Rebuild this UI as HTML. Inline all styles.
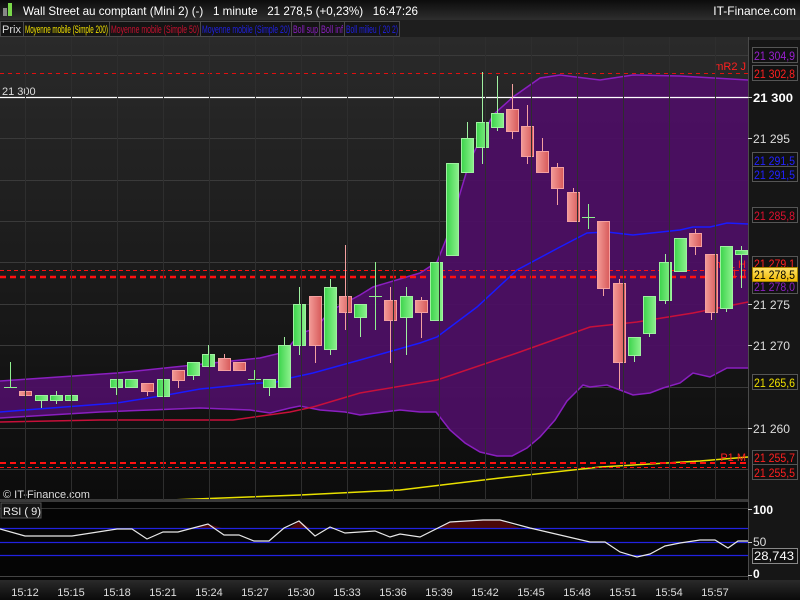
<!DOCTYPE html>
<html><head><meta charset="utf-8"><style>
html,body{margin:0;padding:0;width:800px;height:600px;overflow:hidden;background:#0a0a0a;font-family:"Liberation Sans",sans-serif}
svg text{font-family:"Liberation Sans",sans-serif}
</style></head><body>
<svg width="800" height="600" viewBox="0 0 800 600" xmlns="http://www.w3.org/2000/svg">
<defs>
<linearGradient id="bg" x1="0" y1="0" x2="0" y2="1"><stop offset="0" stop-color="#2b2b2b"/><stop offset="1" stop-color="#0c0c0c"/></linearGradient>
<linearGradient id="hd" x1="0" y1="0" x2="0" y2="1"><stop offset="0" stop-color="#0c0c0c"/><stop offset="1" stop-color="#2e2e2e"/></linearGradient>
<linearGradient id="gg" x1="0" y1="0" x2="1" y2="0"><stop offset="0" stop-color="#3cd44c"/><stop offset="1" stop-color="#8cf08c"/></linearGradient>
<linearGradient id="rg" x1="0" y1="0" x2="1" y2="0"><stop offset="0" stop-color="#f29a96"/><stop offset="1" stop-color="#d85a5a"/></linearGradient>
<linearGradient id="yl" x1="0" y1="0" x2="0" y2="1"><stop offset="0" stop-color="#ffe36a"/><stop offset="1" stop-color="#f0b800"/></linearGradient>
<linearGradient id="lb" x1="0" y1="0" x2="0" y2="1"><stop offset="0" stop-color="#2a2a2a"/><stop offset="1" stop-color="#0a0a0a"/></linearGradient>
</defs>
<!-- header -->
<rect x="0" y="0" width="800" height="20" fill="url(#hd)"/>
<rect x="3" y="8" width="4" height="8" fill="#888"/><rect x="8" y="3" width="4" height="13" fill="#7ad94a"/>
<text x="23" y="15" font-size="12" fill="#fff" xml:space="preserve" textLength="395" lengthAdjust="spacingAndGlyphs">Wall Street au comptant (Mini 2) (-)   1 minute   21 278,5 (+0,23%)   16:47:26</text>
<text x="796" y="15" font-size="12" fill="#fff" text-anchor="end">IT-Finance.com</text>
<!-- chart background -->
<rect x="0" y="20" width="800" height="480" fill="url(#bg)"/>
<rect x="748" y="40" width="52" height="560" fill="#161616"/>
<!-- grid -->
<g stroke="#3a3a3a" stroke-width="1">
<line x1="0" y1="55.5" x2="748" y2="55.5"/><line x1="0" y1="138.5" x2="748" y2="138.5"/><line x1="0" y1="180.5" x2="748" y2="180.5"/><line x1="0" y1="221.5" x2="748" y2="221.5"/><line x1="0" y1="262.5" x2="748" y2="262.5"/><line x1="0" y1="304.5" x2="748" y2="304.5"/><line x1="0" y1="345.5" x2="748" y2="345.5"/><line x1="0" y1="387.5" x2="748" y2="387.5"/><line x1="0" y1="428.5" x2="748" y2="428.5"/><line x1="0" y1="469.5" x2="748" y2="469.5"/>
<g id="vg"><line x1="25.5" y1="37" x2="25.5" y2="500"/><line x1="71.5" y1="37" x2="71.5" y2="500"/><line x1="117.5" y1="37" x2="117.5" y2="500"/><line x1="163.5" y1="37" x2="163.5" y2="500"/><line x1="209.5" y1="37" x2="209.5" y2="500"/><line x1="255.5" y1="37" x2="255.5" y2="500"/><line x1="301.5" y1="37" x2="301.5" y2="500"/><line x1="347.5" y1="37" x2="347.5" y2="500"/><line x1="393.5" y1="37" x2="393.5" y2="500"/><line x1="439.5" y1="37" x2="439.5" y2="500"/><line x1="485.5" y1="37" x2="485.5" y2="500"/><line x1="531.5" y1="37" x2="531.5" y2="500"/><line x1="577.5" y1="37" x2="577.5" y2="500"/><line x1="623.5" y1="37" x2="623.5" y2="500"/><line x1="669.5" y1="37" x2="669.5" y2="500"/><line x1="715.5" y1="37" x2="715.5" y2="500"/></g>
</g>
<!-- bollinger fill -->
<path d="M0,381 L117,373 L260,358 L285,352 L300,333 L315,329 L330,311 L360,295 L373,287 L420,273 L437,262 L447,237 L470,160 L493,115 L513,97 L540,78 L560,75 L600,80 L633,75 L680,76 L748,80 L748,368 L727,368 L710,377 L693,373 L680,383 L663,388 L650,393 L633,395 L620,390 L607,385 L590,387 L583,385 L567,401 L555,420 L540,437 L527,448 L512,456 L497,456 L480,452 L465,443 L450,430 L436,412 L420,412 L400,410 L360,415 L345,412 L320,410 L300,406 L290,408 L270,413 L250,410 L200,408 L150,410 L100,412 L50,415 L0,418 Z" fill="#4c0f63" opacity="0.95"/>
<path d="M0,381 L117,373 L260,358 L285,352 L300,333 L315,329 L330,311 L360,295 L373,287 L420,273 L437,262 L447,237 L470,160 L493,115 L513,97 L540,78 L560,75 L600,80 L633,75 L680,76 L748,80" fill="none" stroke="#8a1fc0" stroke-width="1.5"/>
<path d="M748,368 L727,368 L710,377 L693,373 L680,383 L663,388 L650,393 L633,395 L620,390 L607,385 L590,387 L583,385 L567,401 L555,420 L540,437 L527,448 L512,456 L497,456 L480,452 L465,443 L450,430 L436,412 L420,412 L400,410 L360,415 L345,412 L320,410 L300,406 L290,408 L270,413 L250,410 L200,408 L150,410 L100,412 L50,415 L0,418" fill="none" stroke="#8a1fc0" stroke-width="1.5"/>
<!-- MA200 yellow -->
<path d="M170,500 L300,495 L400,490 L500,478 L600,467 L700,461 L748,457" fill="none" stroke="#e8e000" stroke-width="1.5"/>
<!-- MA50 red -->
<path d="M0,422 L100,420 L233,420 L290,412 L313,407 L360,393 L437,380 L517,353 L590,327 L637,322 L693,313 L748,302" fill="none" stroke="#c8103a" stroke-width="1.5"/>
<!-- MA20 blue -->
<path d="M0,412 L25,410 L117,403 L167,395 L200,389 L260,383 L273,383 L290,378 L313,373 L360,360 L420,343 L437,337 L477,307 L517,270 L560,247 L587,233 L607,232 L633,235 L680,230 L693,227 L710,227 L727,223 L748,224" fill="none" stroke="#1a1aff" stroke-width="1.5"/>
<!-- horizontal lines -->
<line x1="0" y1="97.5" x2="748" y2="97.5" stroke="#fff" stroke-width="1.2"/>
<text x="2" y="95" font-size="11" fill="#ddd">21 300</text>
<line x1="0" y1="73.5" x2="748" y2="73.5" stroke="#e01010" stroke-dasharray="4,4"/>
<text x="746" y="70" font-size="11" fill="#ff2020" text-anchor="end">mR2 J</text>
<line x1="0" y1="270.5" x2="748" y2="270.5" stroke="#ff1010" stroke-dasharray="4,3"/>
<line x1="0" y1="277" x2="748" y2="277" stroke="#ff1010" stroke-width="2.5" stroke-dasharray="6,4"/>
<text x="746" y="268" font-size="11" fill="#ff2020" text-anchor="end">mR1 H</text>
<text x="746" y="277" font-size="11" fill="#ff2020" text-anchor="end">R1 J</text>
<line x1="0" y1="463" x2="748" y2="463" stroke="#ff1010" stroke-width="2" stroke-dasharray="6,4"/>
<line x1="0" y1="467.5" x2="748" y2="467.5" stroke="#ff1010" stroke-dasharray="4,3"/>
<text x="746" y="461" font-size="11" fill="#ff2020" text-anchor="end">P1 M</text>
<!-- candles -->
<g stroke-width="1">
<g stroke="#8ff08f"><line x1="10.5" y1="362" x2="10.5" y2="387"/><line x1="4" y1="387.5" x2="17" y2="387.5"/></g>
<g stroke="#f4a0a0"><line x1="25.5" y1="379" x2="25.5" y2="395"/><rect x="19.5" y="391.5" width="12" height="4" fill="url(#rg)"/></g>
<g stroke="#9ff0a0" fill="url(#gg)">
<line x1="41.5" y1="395" x2="41.5" y2="408"/><rect x="35.5" y="395.5" width="12" height="5"/>
<line x1="56.5" y1="391" x2="56.5" y2="404"/><rect x="50.5" y="395.5" width="12" height="5"/>
<line x1="71.5" y1="395" x2="71.5" y2="413"/><rect x="65.5" y="395.5" width="12" height="5"/>
<line x1="116.5" y1="379" x2="116.5" y2="395"/><rect x="110.5" y="379.5" width="12" height="8"/>
<rect x="125.5" y="379.5" width="12" height="8"/>
<rect x="157.5" y="379.5" width="12" height="17"/>
<line x1="193.5" y1="362" x2="193.5" y2="380"/><rect x="187.5" y="362.5" width="12" height="13"/>
<line x1="208.5" y1="345" x2="208.5" y2="366"/><rect x="202.5" y="354.5" width="12" height="12"/>
<line x1="269.5" y1="379" x2="269.5" y2="396"/><rect x="263.5" y="379.5" width="12" height="8"/>
<line x1="284.5" y1="337" x2="284.5" y2="387"/><rect x="278.5" y="345.5" width="12" height="42"/>
<line x1="299.5" y1="287" x2="299.5" y2="355"/><rect x="293.5" y="304.5" width="12" height="41"/>
<line x1="330.5" y1="279" x2="330.5" y2="355"/><rect x="324.5" y="287.5" width="12" height="62"/>
<line x1="360.5" y1="304" x2="360.5" y2="337"/><rect x="354.5" y="304.5" width="12" height="13"/>
<line x1="406.5" y1="287" x2="406.5" y2="355"/><rect x="400.5" y="296.5" width="12" height="21"/>
<rect x="430.5" y="262.5" width="12" height="58"/>
<rect x="446.5" y="163.5" width="12" height="92"/>
<line x1="467.5" y1="122" x2="467.5" y2="172"/><rect x="461.5" y="138.5" width="12" height="34"/>
<line x1="482.5" y1="72" x2="482.5" y2="164"/><rect x="476.5" y="122.5" width="12" height="25"/>
<line x1="497.5" y1="76" x2="497.5" y2="131"/><rect x="491.5" y="113.5" width="12" height="14"/>
<line x1="634.5" y1="337" x2="634.5" y2="362"/><rect x="628.5" y="337.5" width="12" height="18"/>
<line x1="649.5" y1="296" x2="649.5" y2="337"/><rect x="643.5" y="296.5" width="12" height="37"/>
<line x1="665.5" y1="254" x2="665.5" y2="304"/><rect x="659.5" y="262.5" width="12" height="38"/>
<rect x="674.5" y="238.5" width="12" height="33"/>
<line x1="726.5" y1="246" x2="726.5" y2="312"/><rect x="720.5" y="246.5" width="12" height="62"/>
<line x1="741.5" y1="246" x2="741.5" y2="288"/><rect x="735.5" y="250.5" width="12" height="4"/>
</g>
<g stroke="#f4a0a0" fill="url(#rg)">
<line x1="147.5" y1="383" x2="147.5" y2="396"/><rect x="141.5" y="383.5" width="12" height="8"/>
<line x1="178.5" y1="370" x2="178.5" y2="388"/><rect x="172.5" y="370.5" width="12" height="10"/>
<line x1="224.5" y1="354" x2="224.5" y2="370"/><rect x="218.5" y="358.5" width="12" height="12"/>
<rect x="233.5" y="362.5" width="12" height="8"/>
<line x1="315.5" y1="296" x2="315.5" y2="363"/><rect x="309.5" y="296.5" width="12" height="49"/>
<line x1="345.5" y1="245" x2="345.5" y2="330"/><rect x="339.5" y="296.5" width="12" height="16"/>
<line x1="390.5" y1="287" x2="390.5" y2="363"/><rect x="384.5" y="300.5" width="12" height="20"/>
<line x1="421.5" y1="297" x2="421.5" y2="338"/><rect x="415.5" y="300.5" width="12" height="12"/>
<line x1="512.5" y1="84" x2="512.5" y2="139"/><rect x="506.5" y="109.5" width="12" height="22"/>
<line x1="527.5" y1="105" x2="527.5" y2="164"/><rect x="521.5" y="126.5" width="12" height="30"/>
<line x1="542.5" y1="138" x2="542.5" y2="172"/><rect x="536.5" y="151.5" width="12" height="21"/>
<line x1="557.5" y1="163" x2="557.5" y2="205"/><rect x="551.5" y="167.5" width="12" height="21"/>
<line x1="573.5" y1="188" x2="573.5" y2="221"/><rect x="567.5" y="192.5" width="12" height="29"/>
<line x1="603.5" y1="221" x2="603.5" y2="296"/><rect x="597.5" y="221.5" width="12" height="67"/>
<line x1="619.5" y1="279" x2="619.5" y2="389"/><rect x="613.5" y="283.5" width="12" height="79"/>
<line x1="695.5" y1="229" x2="695.5" y2="255"/><rect x="689.5" y="233.5" width="12" height="13"/>
<line x1="711.5" y1="254" x2="711.5" y2="320"/><rect x="705.5" y="254.5" width="12" height="58"/>
</g>
<g stroke="#8ff08f"><line x1="254.5" y1="370" x2="254.5" y2="379"/><line x1="248" y1="379.5" x2="261" y2="379.5"/>
<line x1="375.5" y1="262" x2="375.5" y2="330"/><line x1="369" y1="296.5" x2="382" y2="296.5"/>
<line x1="588.5" y1="204" x2="588.5" y2="229"/><line x1="582" y1="217.5" x2="595" y2="217.5"/></g>
</g>
<text x="3" y="498" font-size="11" fill="#ddd">© IT-Finance.com</text>
<!-- separators -->
<rect x="0" y="499" width="748" height="3" fill="#3a3a3a"/>
<line x1="748.5" y1="37" x2="748.5" y2="580" stroke="#4a4a4a"/>
<!-- RSI panel -->
<rect x="0" y="502" width="748" height="78" fill="#050505"/>
<g stroke="#2e2e2e"><use href="#vg"/></g>
<line x1="0" y1="508.5" x2="748" y2="508.5" stroke="#333"/>
<line x1="0" y1="576.5" x2="748" y2="576.5" stroke="#444"/>
<path d="M440,528 L450,522 L483,520 L500,520 L520,528 Z" fill="#4a0808"/>
<path d="M193,528 L208,524 L222,528 Z" fill="#4a0808"/>
<path d="M290,528 L299,521 L310,528 Z" fill="#4a0808"/>
<g stroke="#2222e0" stroke-width="1.2"><line x1="0" y1="528.5" x2="748" y2="528.5"/><line x1="0" y1="542.5" x2="748" y2="542.5"/><line x1="0" y1="555.5" x2="748" y2="555.5"/></g>
<path d="M0,529 L25,536 L72,536 L117,529 L132,529 L147,539 L163,532 L178,532 L193,528 L208,524 L224,535 L239,535 L254,541 L269,541 L284,528 L299,521 L315,536 L330,527 L345,533 L375,531 L390,537 L400,534 L420,537 L450,522 L483,520 L500,520 L530,528 L560,535 L590,542 L605,542 L620,552 L637,557 L650,554 L665,546 L680,543 L700,540 L715,540 L728,548 L738,541 L748,541" fill="none" stroke="#e8e8e8" stroke-width="1.2"/>
<rect x="1" y="503" width="40" height="15" fill="#151515" stroke="#555"/>
<text x="3" y="515" font-size="11" fill="#eee">RSI ( 9)</text>
<!-- time axis -->
<rect x="0" y="580" width="800" height="20" fill="url(#lb)"/>
<g font-size="11" fill="#ddd" text-anchor="middle">
<text x="25" y="596">15:12</text><text x="71" y="596">15:15</text><text x="117" y="596">15:18</text><text x="163" y="596">15:21</text><text x="209" y="596">15:24</text><text x="255" y="596">15:27</text><text x="301" y="596">15:30</text><text x="347" y="596">15:33</text><text x="393" y="596">15:36</text><text x="439" y="596">15:39</text><text x="485" y="596">15:42</text><text x="531" y="596">15:45</text><text x="577" y="596">15:48</text><text x="623" y="596">15:51</text><text x="669" y="596">15:54</text><text x="715" y="596">15:57</text>
</g>
<!-- price axis -->
<g font-size="12" fill="#ddd">
<text x="753" y="102" font-weight="bold" fill="#fff" textLength="40" lengthAdjust="spacingAndGlyphs">21 300</text>
<text x="753" y="143" textLength="37" lengthAdjust="spacingAndGlyphs">21 295</text>
<text x="753" y="309" textLength="37" lengthAdjust="spacingAndGlyphs">21 275</text>
<text x="753" y="350" textLength="37" lengthAdjust="spacingAndGlyphs">21 270</text>
<text x="753" y="433" textLength="37" lengthAdjust="spacingAndGlyphs">21 260</text>
<text x="753" y="514" font-weight="bold" fill="#fff">100</text>
<text x="753" y="546">50</text>
<text x="753" y="578" font-weight="bold" fill="#fff">0</text>
</g>
<g stroke="#ccc"><line x1="748" y1="97.5" x2="752" y2="97.5"/><line x1="748" y1="138.5" x2="752" y2="138.5"/><line x1="748" y1="304.5" x2="752" y2="304.5"/><line x1="748" y1="345.5" x2="752" y2="345.5"/><line x1="748" y1="428.5" x2="752" y2="428.5"/><line x1="748" y1="509.5" x2="752" y2="509.5"/><line x1="748" y1="542.5" x2="752" y2="542.5"/><line x1="748" y1="575.5" x2="752" y2="575.5"/></g>
<g font-size="12" stroke="#555">
<rect x="752.5" y="47.5" width="45" height="15" fill="#111"/><text x="754" y="60" fill="#9a1fd0" stroke="none" textLength="41" lengthAdjust="spacingAndGlyphs">21 304,9</text>
<rect x="752.5" y="65.5" width="45" height="15" fill="#111"/><text x="754" y="78" fill="#ff2020" stroke="none" textLength="41" lengthAdjust="spacingAndGlyphs">21 302,8</text>
<rect x="752.5" y="152.5" width="45" height="15" fill="#111"/><text x="754" y="165" fill="#2222ff" stroke="none" textLength="41" lengthAdjust="spacingAndGlyphs">21 291,5</text>
<rect x="752.5" y="166.5" width="45" height="15" fill="#111"/><text x="754" y="179" fill="#2222ff" stroke="none" textLength="41" lengthAdjust="spacingAndGlyphs">21 291,5</text>
<rect x="752.5" y="207.5" width="45" height="15" fill="#111"/><text x="754" y="220" fill="#e01030" stroke="none" textLength="41" lengthAdjust="spacingAndGlyphs">21 285,8</text>
<rect x="752.5" y="256.5" width="45" height="15" fill="#111"/><text x="754" y="268" fill="#ff2020" stroke="none" textLength="41" lengthAdjust="spacingAndGlyphs">21 279,1</text>
<rect x="752.5" y="279.5" width="45" height="14" fill="#111"/><text x="754" y="291" fill="#8a1fc0" stroke="none" textLength="41" lengthAdjust="spacingAndGlyphs">21 278,0</text>
<rect x="752.5" y="267.5" width="45" height="14" fill="url(#yl)" stroke="#aa8800"/><text x="754" y="279" fill="#000" stroke="none" textLength="41" lengthAdjust="spacingAndGlyphs">21 278,5</text>
<rect x="752.5" y="374.5" width="45" height="15" fill="#111"/><text x="754" y="387" fill="#f0e000" stroke="none" textLength="41" lengthAdjust="spacingAndGlyphs">21 265,6</text>
<rect x="752.5" y="450.5" width="45" height="15" fill="#111"/><text x="754" y="462" fill="#ff2020" stroke="none" textLength="41" lengthAdjust="spacingAndGlyphs">21 255,7</text>
<rect x="752.5" y="464.5" width="45" height="15" fill="#111"/><text x="754" y="477" fill="#ff2020" stroke="none" textLength="41" lengthAdjust="spacingAndGlyphs">21 255,5</text>
<rect x="752.5" y="548.5" width="45" height="15" fill="#111" stroke="#888"/><text x="754" y="560" fill="#fff" stroke="none" textLength="40" lengthAdjust="spacingAndGlyphs">28,743</text>
</g>
<!-- legend bar -->
<rect x="0" y="20" width="800" height="17" fill="#1e1e1e"/>
<g stroke="#4a4a4a" fill="#141414">
<rect x="0.5" y="21.5" width="23" height="15"/><rect x="23.5" y="21.5" width="86" height="15"/><rect x="109.5" y="21.5" width="91" height="15"/><rect x="200.5" y="21.5" width="91" height="15"/><rect x="291.5" y="21.5" width="28" height="15"/><rect x="319.5" y="21.5" width="25" height="15"/><rect x="344.5" y="21.5" width="55" height="15"/>
</g>
<g font-size="11">
<text x="2" y="33" fill="#ddd" textLength="19" lengthAdjust="spacingAndGlyphs">Prix</text>
<text x="25" y="33" fill="#f0e000" textLength="83" lengthAdjust="spacingAndGlyphs">Moyenne mobile (Simple 200)</text>
<text x="111" y="33" fill="#c81030" textLength="88" lengthAdjust="spacingAndGlyphs">Moyenne mobile (Simple 50)</text>
<text x="202" y="33" fill="#2020e0" textLength="88" lengthAdjust="spacingAndGlyphs">Moyenne mobile (Simple 20)</text>
<text x="293" y="33" fill="#8a1fc0" textLength="25" lengthAdjust="spacingAndGlyphs">Boll sup</text>
<text x="321" y="33" fill="#8a1fc0" textLength="22" lengthAdjust="spacingAndGlyphs">Boll inf</text>
<text x="346" y="33" fill="#2020e0" textLength="52" lengthAdjust="spacingAndGlyphs">Boll milieu ( 20 2)</text>
</g>
</svg>
</body></html>
